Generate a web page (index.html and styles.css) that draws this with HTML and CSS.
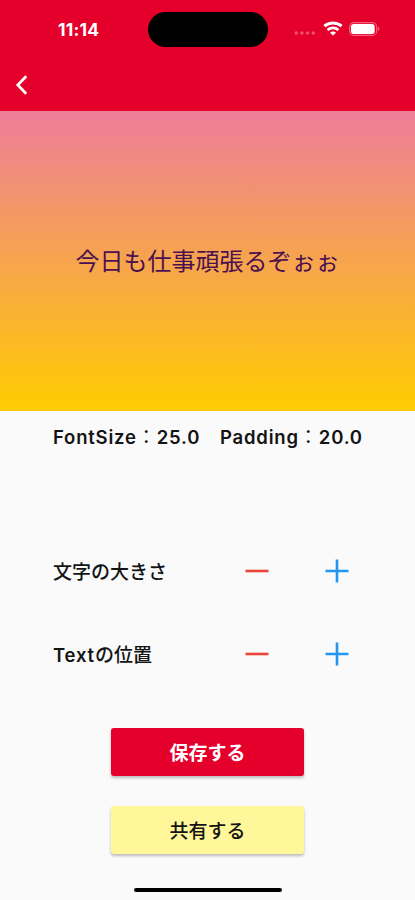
FILE: index.html
```html
<!DOCTYPE html>
<html lang="ja">
<head>
    <meta charset="UTF-8">
    <title>Text Editor</title>
    <link rel="stylesheet" href="styles.css">
</head>
<body>

<div class="header">
    <div class="status-bar">
        <div class="time">11:14</div>
        <div class="island"></div>
        <div class="status-icons">
            <svg class="signal" width="22" height="4" viewBox="0 0 22 4">
                <circle cx="2.2" cy="2" r="1.8"/>
                <circle cx="7.9" cy="2" r="1.8"/>
                <circle cx="13.6" cy="2" r="1.8"/>
                <circle cx="19.3" cy="2" r="1.8"/>
            </svg>
            <svg class="wifi" width="20" height="15" viewBox="0 0 20 15">
                <path d="M1.4 5.2C6 .8 14 .8 18.6 5.2" fill="none" stroke="#fff" stroke-width="3"/>
                <path d="M4.6 8.9C7.6 6.1 12.4 6.1 15.4 8.9" fill="none" stroke="#fff" stroke-width="2.8"/>
                <path d="M10 14.6L7 11.7C8.6 10 11.4 10 13 11.7Z" fill="#fff"/>
            </svg>
            <svg class="battery" width="32" height="14" viewBox="0 0 32 14">
                <rect x=".6" y=".6" width="27" height="12.8" rx="4" fill="none" stroke="#f2607b" stroke-width="1.1"/>
                <rect x="1.9" y="1.9" width="23.8" height="10.2" rx="2.8" fill="#fff"/>
                <path d="M28.8 4.8C31 5.4 31 8.6 28.8 9.2Z" fill="#f2607b"/>
            </svg>
        </div>
    </div>
    <div class="nav-bar">
        <svg width="14" height="22" viewBox="0 0 14 22">
            <path d="M11.2 2.2L2.8 11L11.2 19.8" fill="none" stroke="#fff" stroke-width="2.7"/>
        </svg>
    </div>
</div>

<div class="preview">今日も仕事頑張るぞぉぉ</div>

<div class="values">
    <div class="font-size">FontSize<span class="colon">：</span>25.0</div>
    <div class="padding">Padding<span class="colon">：</span>20.0</div>
</div>

<div class="controls">
    <div class="row">
        <div class="label">文字の大きさ</div>
        <svg class="minus" width="24" height="24" viewBox="0 0 24 24"><path d="M.5 12H23.5"/></svg>
        <svg class="plus" width="24" height="24" viewBox="0 0 24 24"><path d="M.5 12H23.5M12 .5V23.5"/></svg>
    </div>
    <div class="row">
        <div class="label"><span class="latin">Text</span>の位置</div>
        <svg class="minus" width="24" height="24" viewBox="0 0 24 24"><path d="M.5 12H23.5"/></svg>
        <svg class="plus" width="24" height="24" viewBox="0 0 24 24"><path d="M.5 12H23.5M12 .5V23.5"/></svg>
    </div>
</div>

<div class="buttons">
    <button class="save">保存する</button>
    <button class="share">共有する</button>
</div>

<div class="home-indicator"></div>

</body>
</html>
```

FILE: styles.css
```css
* {
    box-sizing: border-box;
}
body {
    font-family: Inter, "Noto Sans CJK JP", sans-serif;
    background-color: #fafafa;
    color: #141414;
    margin: 0;
    height: 900px;
    display: flex;
    flex-direction: column;
    overflow: hidden;
}
svg {
    display: block;
}
.header {
    height: 111px;
    background-color: #e4002b;
}
.status-bar {
    display: grid;
    grid-template-columns: 148px 120px 1fr;
    height: 58px;
    align-items: center;
}
.time {
    padding-left: 58px;
    font-size: 17.5px;
    font-weight: 700;
    letter-spacing: 0.2px;
    color: #fff;
}
.island {
    height: 35px;
    border-radius: 18px;
    background-color: #000;
}
.status-icons {
    display: flex;
    align-items: center;
    padding-left: 26px;
}
.signal {
    fill: #f04e6b;
    margin-top: 7px;
}
.wifi {
    margin-left: 7px;
    margin-top: -1px;
}
.battery {
    margin-left: 6px;
    margin-top: -1px;
}
.nav-bar {
    display: flex;
    align-items: center;
    height: 53px;
    padding-left: 15px;
}
.preview {
    display: flex;
    align-items: center;
    justify-content: center;
    height: 300px;
    padding-bottom: 4px;
    background: linear-gradient(#ee7d9a, #ffcc00);
    color: #4c1050;
    font-size: 24px;
    white-space: nowrap;
}
.values {
    display: flex;
    align-items: center;
    height: 52px;
    padding-left: 53px;
    padding-bottom: 3px;
    font-size: 18.5px;
    font-weight: 600;
    letter-spacing: 0.8px;
    white-space: nowrap;
}
.font-size {
    width: 167px;
}
.colon {
    font-size: 19px;
    font-weight: 400;
    letter-spacing: 1px;
}
.controls {
    margin-top: 66px;
}
.row {
    display: flex;
    align-items: center;
    height: 83px;
    padding-left: 53px;
}
.label {
    width: 192px;
    font-size: 19px;
    font-weight: 500;
    white-space: nowrap;
}
.latin {
    font-size: 18.5px;
    font-weight: 600;
    letter-spacing: 0.8px;
}
.minus {
    fill: none;
    stroke: #ee4338;
    stroke-width: 2.6;
}
.plus {
    margin-left: 56px;
    fill: none;
    stroke: #2196f3;
    stroke-width: 2.6;
}
.buttons {
    display: flex;
    flex-direction: column;
    align-items: center;
    gap: 30px;
    margin-top: 33px;
}
button {
    width: 193px;
    height: 48px;
    padding: 0 0 2px;
    border: none;
    border-radius: 3px;
    box-shadow: 0 2px 3px rgba(0,0,0,0.25);
    font-family: inherit;
    font-size: 19px;
}
.save {
    background-color: #e4002b;
    color: #fff;
    font-weight: 700;
}
.share {
    background-color: #fff799;
    color: #141414;
    font-weight: 500;
}
.home-indicator {
    width: 148px;
    height: 4px;
    margin: 34px auto 0;
    border-radius: 2px;
    background-color: #000;
}
```
